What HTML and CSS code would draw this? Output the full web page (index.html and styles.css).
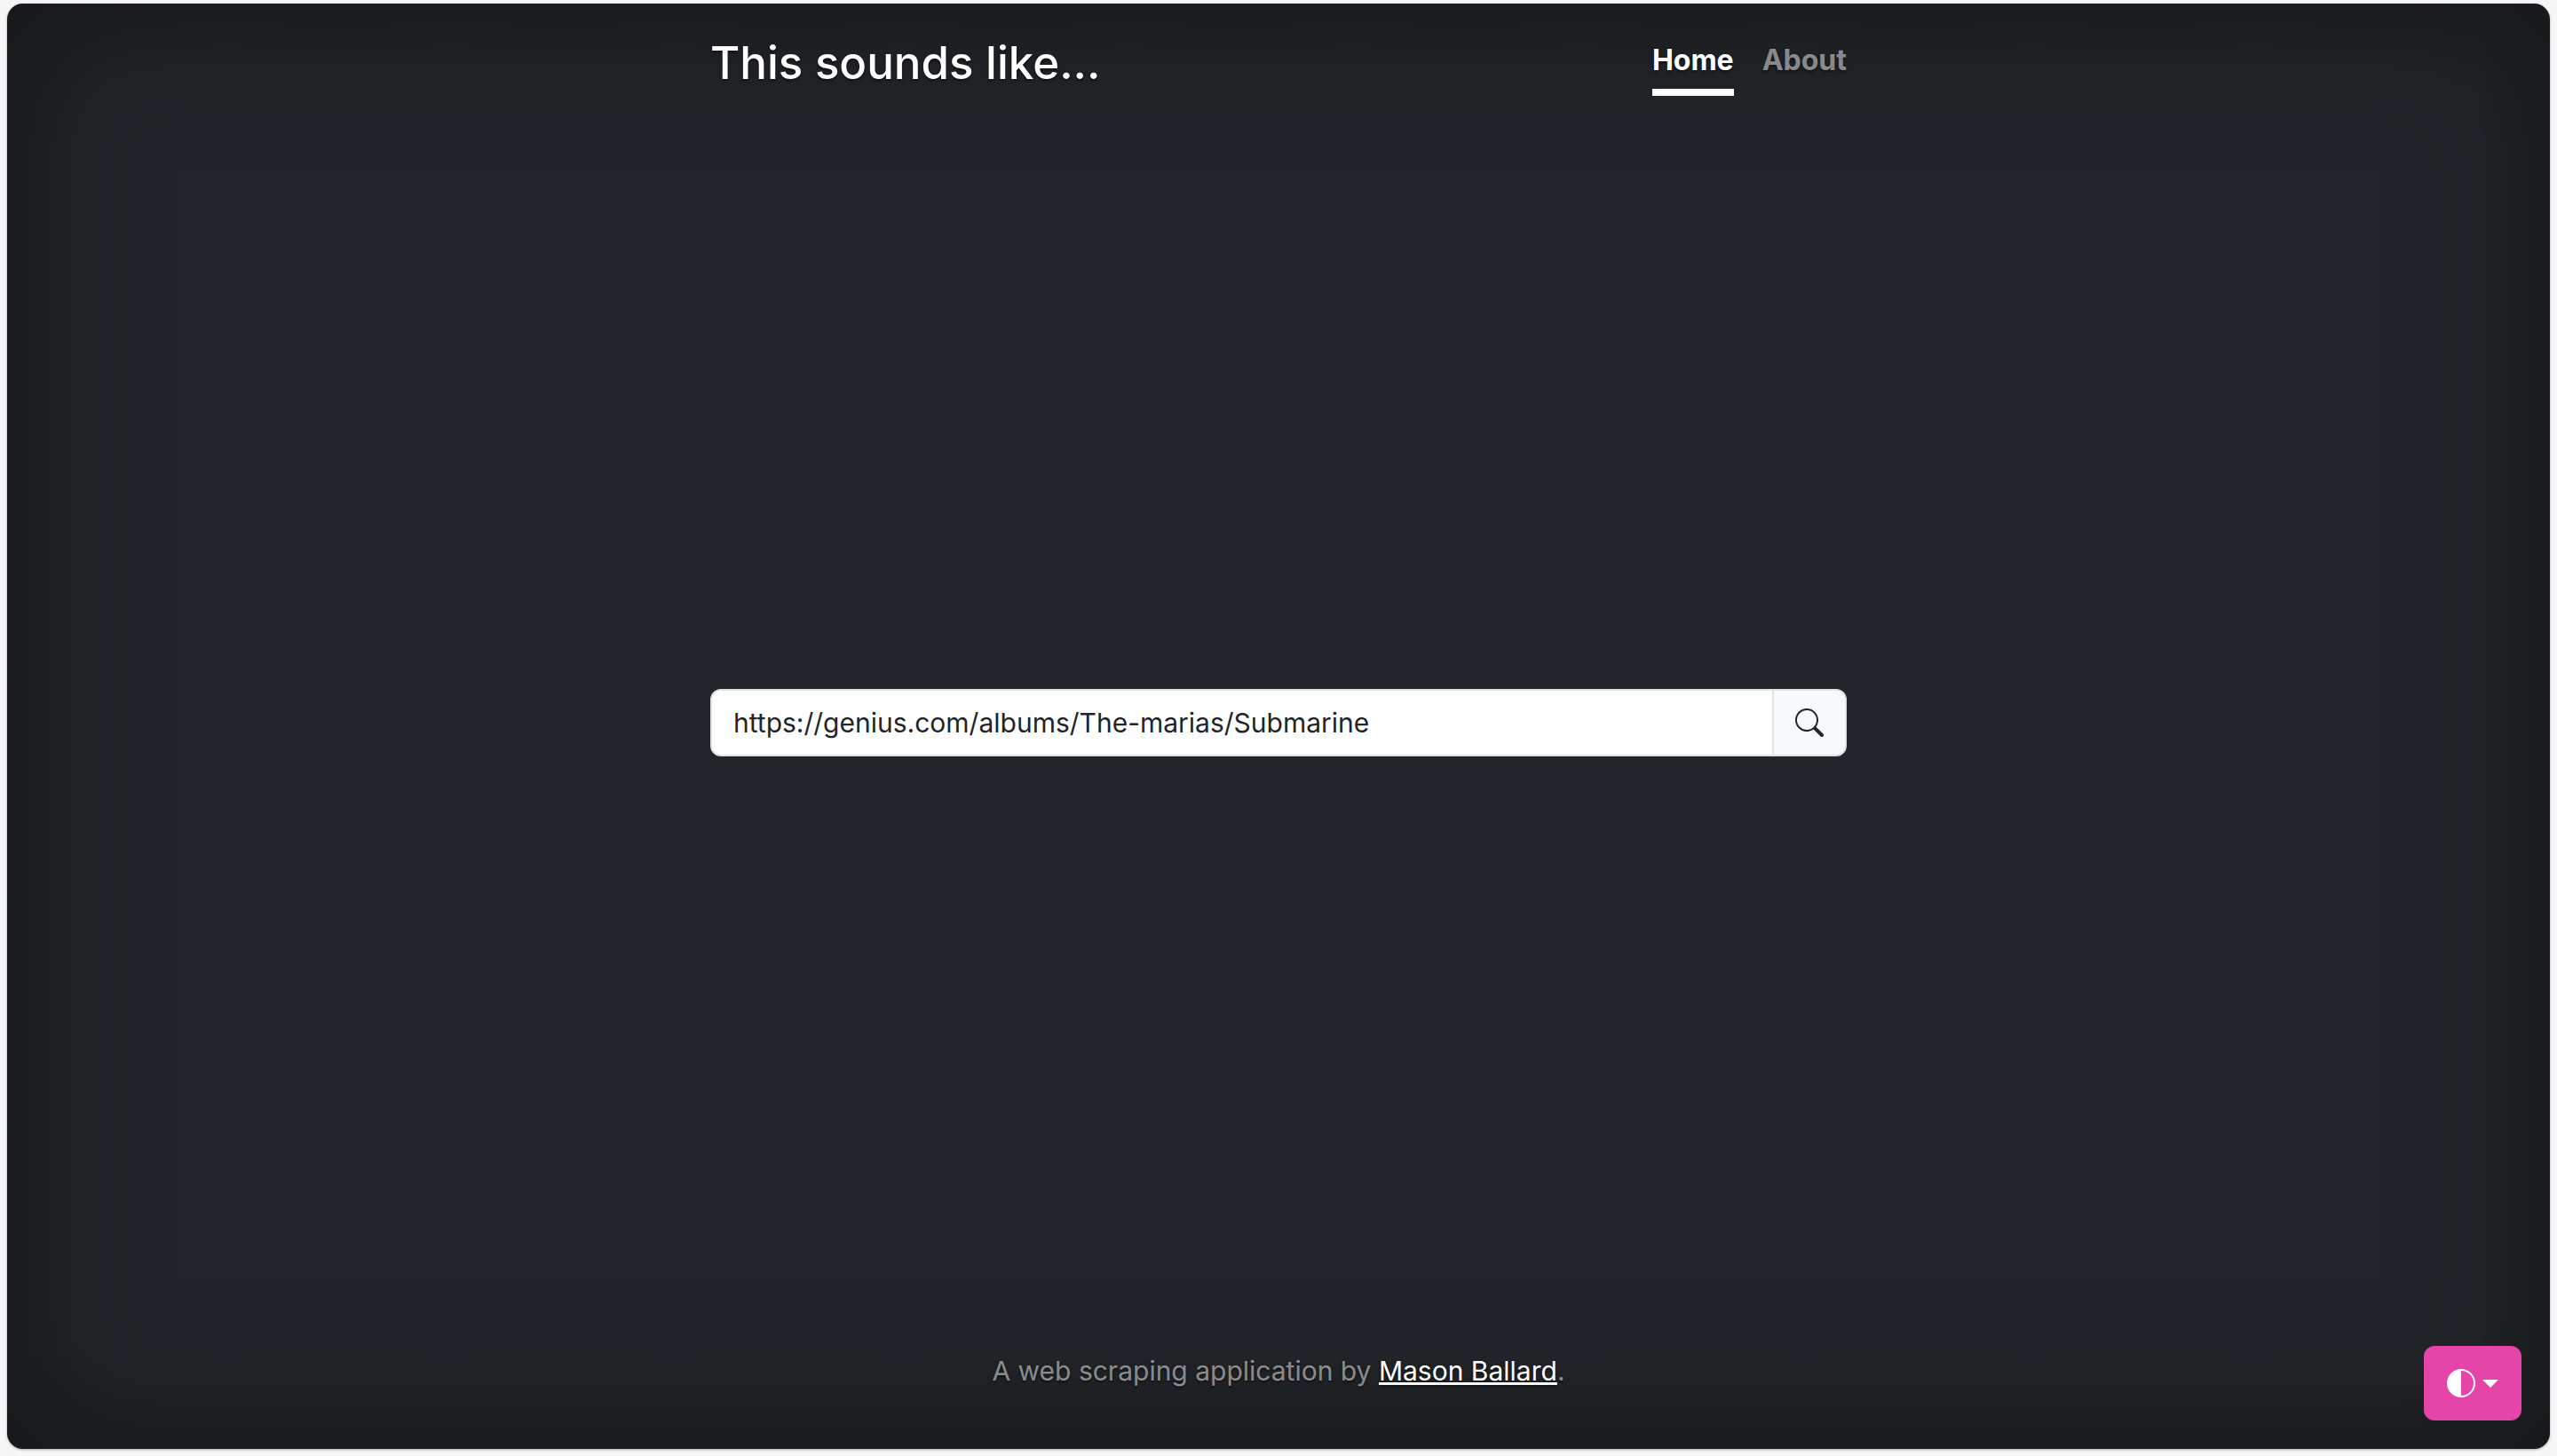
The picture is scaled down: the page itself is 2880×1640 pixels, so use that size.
FILE: index.html
```html
<!DOCTYPE html>
<html lang="en">
<head>
  <meta charset="utf-8">
  <meta name="viewport" content="width=device-width, initial-scale=1">
  <title>This sounds like…</title>
  <link rel="stylesheet" href="styles.css">
</head>
<body>
  <div class="panel">
    <div class="cover">
      <header class="masthead">
        <h1 class="brand">This sounds like...</h1>
        <nav class="nav">
          <a class="nav-link active" href="#" aria-current="page">Home</a>
          <a class="nav-link" href="#about">About</a>
        </nav>
      </header>
      <main>
        <form class="search" role="search">
          <input class="search-input" type="text" aria-label="Album URL" value="https://genius.com/albums/The-marias/Submarine">
          <button class="search-button" type="submit" aria-label="Search">
            <svg class="icon" viewBox="0 0 16 16" fill="currentColor" aria-hidden="true"><path d="M11.742 10.344a6.5 6.5 0 1 0-1.397 1.398h-.001q.044.06.098.115l3.85 3.85a1 1 0 0 0 1.415-1.414l-3.85-3.85a1 1 0 0 0-.115-.1zM12 6.5a5.5 5.5 0 1 1-11 0 5.5 5.5 0 0 1 11 0"/></svg>
          </button>
        </form>
      </main>
      <footer class="footer">
        <p>A web scraping application by <a class="author" href="#author">Mason Ballard</a>.</p>
      </footer>
    </div>
    <button class="theme-toggle" type="button" aria-label="Toggle theme">
      <svg class="icon" viewBox="0 0 16 16" fill="currentColor" aria-hidden="true"><path d="M8 15A7 7 0 1 0 8 1zm0 1A8 8 0 1 1 8 0a8 8 0 0 1 0 16"/></svg>
      <span class="caret"></span>
    </button>
  </div>
</body>
</html>
```

FILE: styles.css
```css
* {
  box-sizing: border-box;
}

body {
  margin: 0;
  min-height: 100vh;
  padding: 4px 8px 8px;
  display: flex;
  background: #f6f6f6;
  color: #fff;
  font-family: Inter, "Liberation Sans", sans-serif;
  font-size: 30px;
  line-height: 48px;
}

.panel {
  flex: 1;
  position: relative;
  display: flex;
  justify-content: center;
  border-radius: 18px;
  background: #222529;
  box-shadow: inset 0 0 160px rgba(0, 0, 0, 0.5), 0 1px 3px rgba(0, 0, 0, 0.3);
  text-shadow: 0 2px 3px rgba(0, 0, 0, 0.5);
}

.cover {
  width: 100%;
  max-width: 1344px;
  padding: 32px;
  display: flex;
  flex-direction: column;
  justify-content: space-between;
}

.masthead {
  display: flex;
  justify-content: space-between;
  align-items: flex-start;
}

.brand {
  margin: 0;
  font-size: 51px;
  font-weight: 500;
  line-height: 70px;
}

.nav {
  display: flex;
  gap: 32px;
}

.nav-link {
  padding: 8px 0;
  border-bottom: 8px solid transparent;
  color: rgba(255, 255, 255, 0.5);
  font-size: 32px;
  font-weight: 700;
  text-decoration: none;
}

.nav-link.active {
  border-bottom-color: #fff;
  color: #fff;
}

.search {
  display: flex;
}

.search-input {
  flex: 1;
  min-width: 0;
  height: 76px;
  padding: 12px 24px;
  border: 2px solid #dee2e6;
  border-radius: 12px 0 0 12px;
  background: #fff;
  color: #212529;
  font: inherit;
}

.search-button {
  display: flex;
  align-items: center;
  justify-content: center;
  width: 84px;
  margin-left: -2px;
  padding: 0;
  border: 2px solid #dee2e6;
  border-radius: 0 12px 12px 0;
  background: #f8f9fa;
  color: #212529;
}

.icon {
  width: 32px;
  height: 32px;
}

.footer {
  text-align: center;
  color: rgba(255, 255, 255, 0.5);
}

.footer p {
  margin: 0 0 32px;
}

.author {
  color: #fff;
}

.theme-toggle {
  position: absolute;
  right: 32px;
  bottom: 32px;
  display: flex;
  align-items: center;
  gap: 8px;
  height: 84px;
  padding: 0 26px;
  border: 0;
  border-radius: 12px;
  background: #e544a8;
  color: #fff;
}

.caret {
  border: 9px solid transparent;
  border-top-color: currentColor;
  border-bottom: 0;
}
```
